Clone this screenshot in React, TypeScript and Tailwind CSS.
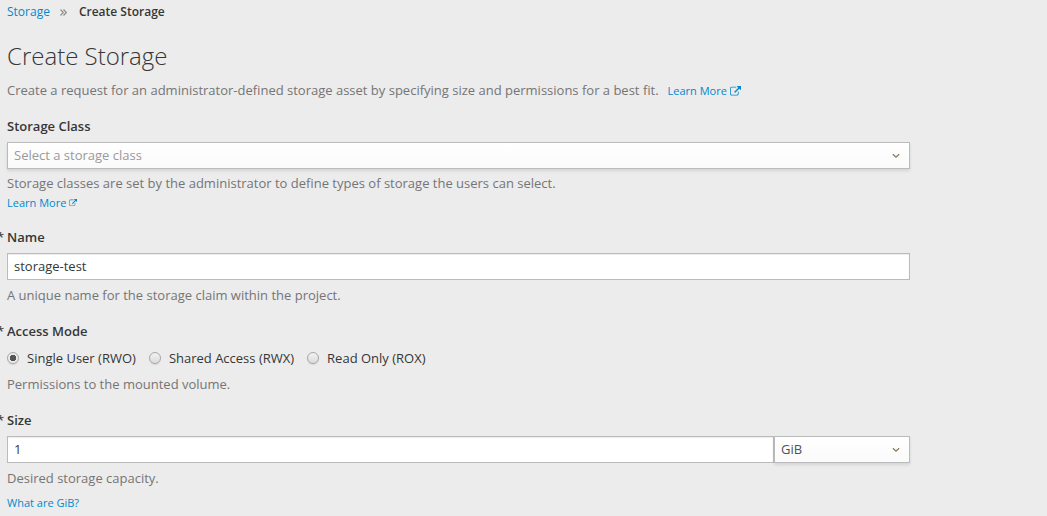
import React from "react";

function ExternalLinkIcon({ className }: { className: string }) {
  return (
    <svg viewBox="0 0 1792 1792" fill="currentColor" aria-hidden="true" className={className}>
      <path d="M1408 928v320q0 119-84.5 203.5t-203.5 84.5h-832q-119 0-203.5-84.5t-84.5-203.5v-832q0-119 84.5-203.5t203.5-84.5h704q14 0 23 9t9 23v64q0 14-9 23t-23 9h-704q-66 0-113 47t-47 113v832q0 66 47 113t113 47h832q66 0 113-47t47-113v-320q0-14 9-23t23-9h64q14 0 23 9t9 23zm384-864v512q0 26-19 45t-45 19-45-19l-176-176-652 652q-10 10-23 10t-23-10l-114-114q-10-10-10-23t10-23l652-652-176-176q-19-19-19-45t19-45 45-19h512q26 0 45 19t19 45z" />
    </svg>
  );
}

function AngleDownIcon() {
  return (
    <svg
      viewBox="0 0 8 6"
      fill="none"
      stroke="currentColor"
      strokeWidth="1.3"
      aria-hidden="true"
      className="pointer-events-none absolute top-[11px] right-[10px] h-[6px] w-[8px] text-[#8b7a5c]"
    >
      <path d="M0.9 1.2 4 4.2 7.1 1.2" />
    </svg>
  );
}

function AngleDoubleRightIcon() {
  return (
    <svg
      viewBox="0 0 7 7"
      fill="none"
      stroke="currentColor"
      strokeWidth="1.2"
      aria-hidden="true"
      className="h-[7px] w-[7px] text-[#909090]"
    >
      <path d="M0.5 0.5 3.3 3.5 0.5 6.5M3.5 0.5 6.3 3.5 3.5 6.5" />
    </svg>
  );
}

function Required() {
  return (
    <span aria-hidden="true" className="absolute -left-[10px] font-normal">
      *
    </span>
  );
}

const labelClass = "relative block w-fit font-semibold";
const helpClass = "text-[#757575]";
const linkClass = "text-[#0088ce] hover:underline";
const inputClass =
  "block h-[27px] w-full min-w-0 border border-[#bbb] bg-white px-[6px] pb-[2px] shadow-[inset_0_1px_1px_rgba(3,3,3,0.075)]";
const selectClass =
  "block h-[27px] w-full appearance-none border border-[#bbb] bg-linear-to-b from-white to-[#fafafa] px-[6px] pb-[2px] shadow-[0_2px_3px_rgba(3,3,3,0.1)]";
const radioClass =
  "h-3 w-3 appearance-none rounded-full border border-[#a8a8a8] bg-linear-to-b from-[#f2f2f2] to-[#dcdcdc] shadow-[0_1px_1px_rgba(3,3,3,0.1)] checked:bg-[radial-gradient(circle,#555_0_3px,#ebebeb_3px)]";

const modes = [
  { value: "rwo", label: "Single User (RWO)" },
  { value: "rwx", label: "Shared Access (RWX)" },
  { value: "rox", label: "Read Only (ROX)" },
];

export default function App() {
  return (
    <main className="min-h-screen bg-[#ececec] px-[7px] pt-[2px] pb-1 font-['Open_Sans',sans-serif] text-[13px] leading-5 text-[#363636]">
      <nav aria-label="Breadcrumb">
        <ol className="flex items-center text-[12px] leading-5">
          <li>
            <a href="#storage" className={linkClass}>
              Storage
            </a>
          </li>
          <li className="flex items-center gap-3 pl-[10px]">
            <AngleDoubleRightIcon />
            <span aria-current="page" className="font-semibold">
              Create Storage
            </span>
          </li>
        </ol>
      </nav>

      <h1 className="mt-5 text-[24px] leading-7 font-light">Create Storage</h1>
      <p className="mt-[10px] text-[#757575]">
        Create a request for an administrator-defined storage asset by specifying size and permissions for a best fit.
        <a href="#learn-storage" className="ml-[9px] inline-flex items-center gap-[3px] text-[11px] text-[#0088ce] hover:underline">
          Learn More
          <ExternalLinkIcon className="h-[11px] w-[11px]" />
        </a>
      </p>

      <form className="mt-[15px] max-w-[903px]" onSubmit={(e) => e.preventDefault()}>
        <label htmlFor="storage-class" className={labelClass}>
          Storage Class
        </label>
        <div className="relative mt-[6px]">
          <select id="storage-class" defaultValue="" className={`${selectClass} text-[#999]`}>
            <option value="">Select a storage class</option>
          </select>
          <AngleDownIcon />
        </div>
        <p className={`mt-1 ${helpClass}`}>
          Storage classes are set by the administrator to define types of storage the users can select.
        </p>
        <a href="#learn-classes" className="flex w-fit items-center gap-[3px] text-[11px] leading-5 text-[#0088ce] hover:underline">
          Learn More
          <ExternalLinkIcon className="h-2 w-2" />
        </a>

        <label htmlFor="claim-name" className={`mt-[14px] ${labelClass}`}>
          <Required />
          Name
        </label>
        <input id="claim-name" type="text" defaultValue="storage-test" className={`mt-[6px] ${inputClass}`} />
        <p className={`mt-[5px] ${helpClass}`}>A unique name for the storage claim within the project.</p>

        <fieldset className="mt-4">
          <legend className={labelClass}>
            <Required />
            Access Mode
          </legend>
          <div className="mt-[7px] flex flex-wrap gap-x-[13px]">
            {modes.map((mode) => (
              <label key={mode.value} className="flex items-center gap-2">
                <input
                  type="radio"
                  name="access-mode"
                  value={mode.value}
                  defaultChecked={mode.value === "rwo"}
                  className={radioClass}
                />
                {mode.label}
              </label>
            ))}
          </div>
        </fieldset>
        <p className={`mt-[6px] ${helpClass}`}>Permissions to the mounted volume.</p>

        <label htmlFor="claim-size" className={`mt-4 ${labelClass}`}>
          <Required />
          Size
        </label>
        <div className="mt-[6px] flex">
          <input id="claim-size" type="text" inputMode="numeric" defaultValue="1" className={inputClass} />
          <div className="relative w-[136px] shrink-0">
            <select aria-label="Unit" defaultValue="GiB" className={`${selectClass} text-[#4d5258]`}>
              <option>GiB</option>
              <option>MiB</option>
              <option>TiB</option>
            </select>
            <AngleDownIcon />
          </div>
        </div>
        <p className={`mt-[5px] ${helpClass}`}>Desired storage capacity.</p>
        <a href="#units" className="mt-[5px] block w-fit text-[11px] leading-5 text-[#0088ce] hover:underline">
          What are GiB?
        </a>
      </form>
    </main>
  );
}
